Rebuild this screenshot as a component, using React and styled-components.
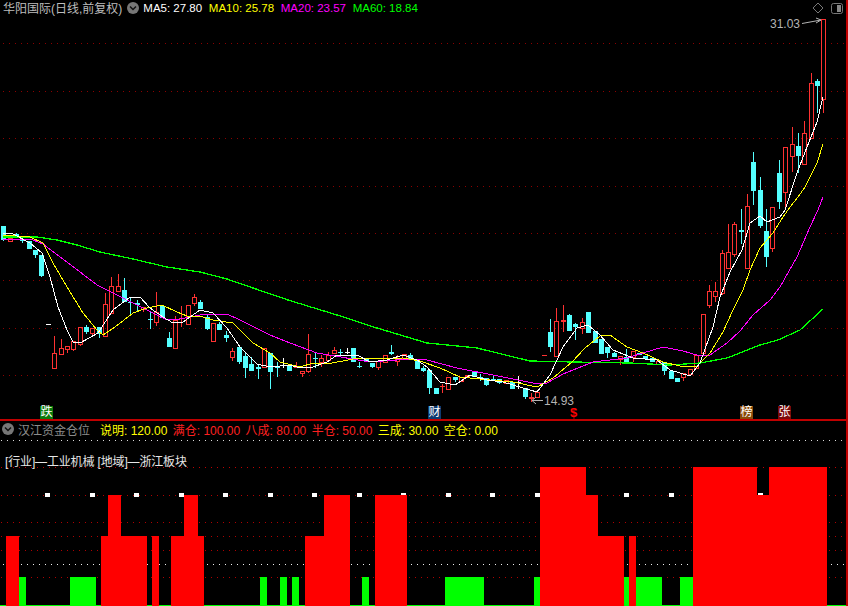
import styled, { createGlobalStyle } from "styled-components";

const GlobalStyle = createGlobalStyle`
  html, body {
    margin: 0;
    padding: 0;
    background: #000;
  }
`;

const FONT = `"Liberation Sans", "Noto Sans CJK SC", sans-serif`;

const Terminal = styled.div`
  display: flex;
  flex-direction: column;
  width: 848px;
  height: 606px;
  overflow: hidden;
  background: #000;
  font-family: ${FONT};
  font-size: 12px;
`;

const PricePanel = styled.section`
  position: relative;
  flex: 0 0 419px;
  border-bottom: 2px solid #c00000;
`;

const IndicatorPanel = styled.section`
  position: relative;
  flex: 1;
`;

const ChartCanvas = styled.svg`
  position: absolute;
  top: 0;
  left: 0;
  display: block;
`;

const PriceHeader = styled.header`
  position: relative;
  display: flex;
  align-items: center;
  height: 15px;
  padding-left: 3px;
`;

const StockName = styled.span`
  color: #bdbdbd;
  font-size: 12px;
  white-space: nowrap;
`;

const RoundToggle = styled.span`
  display: flex;
  align-items: center;
  justify-content: center;
  flex: none;
  width: 12px;
  height: 12px;
  margin: ${(p) => p.$margin};
  border-radius: 50%;
  background: #777;
`;

const MaLabel = styled.span`
  margin-right: 6.7px;
  color: ${(p) => p.$color};
  font-size: 11.5px;
  white-space: nowrap;
`;

const CornerTools = styled.div`
  position: absolute;
  top: 2px;
  right: 5px;
  display: flex;
  align-items: center;
  gap: 7px;
`;

const IndicatorHeader = styled.header`
  position: relative;
  display: flex;
  align-items: center;
  height: 16px;
  padding-left: 2px;
`;

const IndicatorName = styled.span`
  margin-right: 10px;
  color: #8c8c8c;
  font-size: 12px;
  white-space: nowrap;
`;

const LevelLabel = styled.span`
  margin-right: 5.4px;
  color: ${(p) => p.$color};
  white-space: nowrap;
`;

const SectorLine = styled.div`
  position: relative;
  margin: 18px 0 0 5px;
  color: #e6e6e6;
  font-size: 12px;
  line-height: 15px;
  letter-spacing: -0.15px;
`;

const SignalMark = styled.span`
  position: absolute;
  top: 406px;
  left: ${(p) => p.$left}px;
  width: 13px;
  height: 13px;
  color: #fff;
  background: ${(p) => p.$bg};
  font-size: 12px;
  line-height: 13px;
  text-align: center;
`;

const DollarMark = styled.span`
  position: absolute;
  top: 407px;
  left: 570px;
  color: #ff0000;
  font-size: 13px;
  font-weight: bold;
  line-height: 12px;
`;

const PriceNote = styled.span`
  position: absolute;
  top: ${(p) => p.$top}px;
  left: ${(p) => p.$left}px;
  color: #b4b4b4;
  font-size: 12px;
  line-height: 12px;
`;

// kind, body top, body bottom, high, low (pixels on the chart)
const candles = [
  ["c", 226, 240, 226, 241], ["r", 238, 241, 238, 241], ["c", 234, 236, 233, 237], ["c", 240, 241, 238, 243],
  ["c", 241, 249, 241, 249], ["c", 250, 255, 250, 258], ["c", 255, 276, 255, 277], ["d", 324, 325, 324, 325],
  ["r", 353, 368, 336, 368], ["r", 348, 354, 339, 354], ["r", 346, 349, 346, 353], ["r", 341, 349, 341, 351],
  ["r", 327, 344, 327, 346], ["c", 327, 332, 325, 334], ["r", 328, 333, 328, 336], ["c", 327, 334, 327, 338],
  ["r", 304, 336, 293, 337], ["r", 286, 313, 277, 313], ["r", 286, 291, 274, 292], ["c", 290, 302, 278, 302],
  ["c", 302, 303, 298, 315], ["c", 303, 305, 300, 312], ["r", 307, 309, 307, 312], ["c", 319, 320, 312, 329],
  ["r", 312, 322, 292, 326], ["c", 306, 318, 306, 318], ["c", 338, 347, 332, 347], ["r", 320, 348, 316, 348],
  ["f", 318, 319, 306, 327], ["r", 305, 324, 305, 324], ["r", 297, 303, 294, 306], ["c", 302, 309, 300, 309],
  ["c", 317, 329, 314, 330], ["r", 323, 341, 323, 341], ["c", 324, 330, 322, 330], ["c", 335, 338, 331, 342],
  ["r", 351, 357, 348, 361], ["c", 347, 362, 345, 364], ["c", 356, 368, 353, 378], ["c", 364, 371, 357, 371],
  ["c", 367, 369, 364, 379], ["r", 348, 367, 348, 367], ["c", 353, 372, 353, 389], ["c", 367, 368, 362, 377],
  ["w", 365, 366, 358, 368], ["c", 366, 371, 366, 371], ["r", 366, 367, 362, 368], ["r", 371, 373, 371, 377],
  ["r", 354, 371, 334, 373], ["c", 358, 359, 353, 368], ["r", 358, 362, 355, 367], ["r", 355, 360, 352, 360],
  ["r", 350, 353, 347, 353], ["c", 352, 353, 349, 355], ["w", 352, 353, 348, 354], ["c", 348, 362, 348, 362],
  ["c", 366, 367, 362, 368], ["c", 358, 361, 358, 361], ["c", 363, 367, 363, 368], ["r", 361, 367, 360, 370],
  ["r", 355, 362, 355, 362], ["c", 352, 354, 345, 355], ["r", 359, 361, 355, 366], ["r", 354, 358, 354, 358],
  ["c", 355, 359, 353, 359], ["c", 360, 369, 360, 369], ["c", 368, 371, 366, 372], ["c", 370, 388, 370, 394],
  ["c", 388, 394, 388, 394], ["f", 386, 387, 384, 393], ["r", 377, 389, 377, 389], ["c", 377, 380, 377, 382],
  ["r", 377, 381, 377, 381], ["f", 375, 377, 375, 377], ["c", 371, 377, 371, 377], ["c", 377, 378, 374, 381],
  ["c", 378, 385, 378, 386], ["c", 379, 381, 376, 381], ["c", 379, 383, 379, 384], ["r", 380, 383, 380, 383],
  ["c", 382, 389, 382, 389], ["w", 382, 383, 376, 389], ["c", 388, 397, 388, 399], ["f", 397, 399, 393, 402],
  ["r", 392, 397, 392, 397], ["f", 355, 356, 355, 356], ["c", 332, 347, 319, 352], ["r", 321, 356, 308, 356],
  ["f", 320, 322, 305, 332], ["c", 315, 331, 314, 331], ["c", 324, 327, 323, 340], ["r", 322, 328, 318, 334],
  ["c", 312, 333, 312, 333], ["c", 331, 343, 331, 343], ["c", 339, 354, 339, 354], ["c", 347, 353, 347, 358],
  ["c", 353, 357, 352, 357], ["r", 356, 359, 356, 365], ["c", 357, 362, 349, 362], ["r", 351, 357, 351, 362],
  ["c", 353, 355, 353, 355], ["c", 356, 359, 356, 359], ["c", 358, 362, 358, 362], ["r", 361, 364, 361, 364],
  ["c", 362, 371, 362, 375], ["c", 371, 379, 371, 379], ["c", 378, 382, 378, 382], ["r", 373, 377, 373, 381],
  ["r", 369, 374, 369, 374], ["r", 355, 368, 355, 368], ["r", 314, 353, 314, 353], ["r", 291, 305, 285, 308],
  ["r", 291, 296, 282, 302], ["r", 253, 293, 250, 295], ["r", 252, 268, 224, 268], ["r", 224, 254, 222, 257],
  ["c", 230, 232, 209, 244], ["r", 206, 268, 194, 268], ["c", 162, 191, 152, 205], ["c", 190, 226, 177, 228],
  ["c", 231, 257, 209, 267], ["r", 207, 248, 207, 252], ["c", 173, 202, 160, 209], ["r", 147, 192, 147, 210],
  ["r", 144, 156, 127, 172], ["c", 146, 156, 133, 173], ["r", 133, 164, 121, 165], ["r", 83, 138, 73, 138],
  ["c", 81, 86, 79, 113], ["r", 19, 99, 19, 113],
];

const ma60 = "3,237 37,237 57,240 77,245 100,252 133,259 167,267 200,272 227,279 253,288 288,300 337,315 377,328 427,343 477,348 530,361 573,362 630,363 670,365 700,363 727,358 760,345 778,340 800,330 823,309";
const ma20 = "3,239 33,240 43,244 67,262 97,285 113,293 133,303 147,310 167,320 180,319 200,315 227,314 240,320 270,335 290,343 317,353 370,362 410,359 427,360 457,368 503,377 533,383 547,383 563,374 593,362 627,358 643,353 663,347 683,351 700,356 710,355 727,343 740,331 753,315 770,300 780,287 797,257 810,227 818,210 823,197";
const ma10 = "3,235 30,237 43,243 53,263 67,287 83,313 97,330 103,335 115,327 133,313 147,308 162,305 177,312 187,316 203,317 213,320 233,323 253,343 270,353 280,362 300,367 313,363 327,364 353,359 403,358 420,361 440,368 460,377 490,380 513,382 537,387 553,378 572,362 585,348 600,336 610,335 627,347 643,353 663,362 680,366 697,366 710,353 723,332 733,310 743,290 750,270 760,248 773,233 783,217 790,207 798,197 805,187 817,163 823,144";
const ma5 = "3,233 13,234 30,243 42,253 50,277 58,307 67,330 73,342 80,343 98,333 113,310 130,297 140,297 150,308 163,317 173,323 183,322 200,310 213,313 227,328 240,347 257,364 270,367 290,365 300,368 313,367 327,362 337,355 357,355 370,362 387,360 403,355 417,360 427,367 440,382 455,385 470,375 487,380 503,382 523,388 537,392 550,375 563,347 577,328 588,325 600,335 613,350 633,358 657,360 670,370 690,376 700,363 713,327 720,297 730,272 742,250 750,223 760,216 767,222 780,217 785,210 797,173 807,147 817,122 823,97";

const maLines = [
  { points: ma60, color: "#00ff00", width: 1.3 },
  { points: ma20, color: "#ff00ff", width: 1 },
  { points: ma10, color: "#ffff00", width: 1 },
  { points: ma5, color: "#ffffff", width: 1 },
];

const priceGrid = [43, 91, 138, 186, 233, 280, 328, 375];

// left, right, top in the page
const redBars = [
  [6, 19, 536], [101, 147, 536], [108, 121, 495], [152, 159, 536], [171, 204, 536], [184, 198, 495],
  [305, 350, 536], [324, 350, 495], [375, 407, 495], [540, 586, 467], [586, 598, 495], [598, 624, 536],
  [629, 636, 536], [693, 757, 467], [757, 769, 495], [769, 827, 467],
];
const greenBars = [
  [19, 26], [70, 96], [260, 267], [280, 287], [292, 299], [362, 369], [445, 484], [534, 540], [623, 629], [636, 662], [680, 693],
];
const whiteTicks = [47, 92, 136, 181, 225, 270, 314, 359, 403, 448, 492, 537, 626, 671, 760];

const marks = [
  { left: 40, bg: "#0b7a0b", text: "跌" },
  { left: 428, bg: "#0c3a70", text: "财" },
  { left: 740, bg: "#8a4a08", text: "榜" },
  { left: 778, bg: "#7a0a0a", text: "张" },
];

const ChevronDown = () => (
  <svg width="8" height="6" viewBox="0 0 8 6">
    <path d="M1 1.5 L4 4.5 L7 1.5" fill="none" stroke="#111" strokeWidth="1.5" />
  </svg>
);

const PriceChart = () => (
  <ChartCanvas width="848" height="419" viewBox="0 0 848 419">
    {priceGrid.map((y) => (
      <line key={y} x1="3" x2="845" y1={y + 0.5} y2={y + 0.5} stroke="#8c0000" strokeDasharray="1 5" />
    ))}
    <line x1="847" x2="847" y1="0" y2="419" stroke="#c00000" strokeWidth="2" />
    {candles.map(([kind, top, bottom, high, low], i) => {
      const x = Math.round(3.3 + i * 6.357);
      const color = kind === "c" ? "#54ffff" : kind === "w" || kind === "d" ? "#fff" : "#ff3232";
      if (kind === "r") {
        return (
          <g key={i} stroke={color} fill="none" shapeRendering="crispEdges">
            <line x1={x + 0.5} x2={x + 0.5} y1={high} y2={top} />
            <line x1={x + 0.5} x2={x + 0.5} y1={bottom} y2={low} />
            <rect x={x - 2 + 0.5} y={top + 0.5} width="4" height={bottom - top} />
          </g>
        );
      }
      return (
        <g key={i} fill={color} shapeRendering="crispEdges">
          <rect x={x} y={high} width="1" height={low - high} />
          <rect x={x - 2} y={top} width="5" height={bottom - top} />
        </g>
      );
    })}
    {maLines.map((line) => (
      <polyline key={line.color} points={line.points} fill="none" stroke={line.color} strokeWidth={line.width} shapeRendering="crispEdges" />
    ))}
    <path d="M802 23.5 L821 20 M816 18 L821 20 L816 23" fill="none" stroke="#b4b4b4" />
    <path d="M532 400.5 H543 M536 397 L532 400.5 L536 404" fill="none" stroke="#b4b4b4" />
  </ChartCanvas>
);

const IndicatorChart = () => (
  <ChartCanvas width="848" height="185" viewBox="0 421 848 185">
    <line x1="1" x2="846" y1="440.5" y2="440.5" stroke="#dcdcdc" strokeDasharray="1 5" />
    <line x1="1" x2="846" y1="467.5" y2="467.5" stroke="#c00000" strokeDasharray="1 5" />
    {[495, 522, 536, 550, 577].map((y) => (
      <line key={y} x1="1" x2="846" y1={y + 0.5} y2={y + 0.5} stroke="#b00000" strokeDasharray="1 5" />
    ))}
    <line x1="3" x2="846" y1="564.5" y2="564.5" stroke="#f0f0f0" strokeDasharray="1 5" />
    <rect x="0" y="605" width="848" height="1" fill="#00ff00" />
    <rect x="846" y="421" width="2" height="185" fill="#c00000" />
    {whiteTicks.map((x) => (
      <rect key={x} x={x - 2} y="493" width="5" height="4" fill="#fff" />
    ))}
    {greenBars.map(([left, right]) => (
      <rect key={left} x={left} y="577" width={right - left} height="29" fill="#00ff00" />
    ))}
    {redBars.map(([left, right, top]) => (
      <rect key={left + "-" + top} x={left} y={top} width={right - left} height={606 - top} fill="#ff0000" />
    ))}
  </ChartCanvas>
);

const CornerIcons = () => (
  <CornerTools>
    <svg width="12" height="12" viewBox="0 0 12 12">
      <path d="M6 1 L11 6 L6 11 L1 6 Z" fill="none" stroke="#777" />
    </svg>
    <svg width="12" height="11" viewBox="0 0 12 11">
      <rect x="0.5" y="0.5" width="11" height="10" rx="2" fill="none" stroke="#777" />
      <rect x="6" y="2" width="4" height="7" fill="#888" />
    </svg>
  </CornerTools>
);

export default function App() {
  return (
    <Terminal>
      <GlobalStyle />
      <PricePanel>
        <PriceChart />
        <PriceHeader>
          <StockName>华阳国际(日线,前复权)</StockName>
          <RoundToggle $margin="0 4px 0 5px">
            <ChevronDown />
          </RoundToggle>
          <MaLabel $color="#ffffff">MA5: 27.80</MaLabel>
          <MaLabel $color="#ffff00">MA10: 25.78</MaLabel>
          <MaLabel $color="#ff00ff">MA20: 23.57</MaLabel>
          <MaLabel $color="#00ff00">MA60: 18.84</MaLabel>
          <CornerIcons />
        </PriceHeader>
        {marks.map((m) => (
          <SignalMark key={m.text} $left={m.left} $bg={m.bg}>
            {m.text}
          </SignalMark>
        ))}
        <DollarMark>$</DollarMark>
        <PriceNote $top={18} $left={770}>31.03</PriceNote>
        <PriceNote $top={395} $left={544}>14.93</PriceNote>
      </PricePanel>
      <IndicatorPanel>
        <IndicatorChart />
        <IndicatorHeader>
          <RoundToggle $margin="0 4px 0 0">
            <ChevronDown />
          </RoundToggle>
          <IndicatorName>汉江资金仓位</IndicatorName>
          <LevelLabel $color="#ffff00">说明: 120.00</LevelLabel>
          <LevelLabel $color="#ff2020">满仓: 100.00</LevelLabel>
          <LevelLabel $color="#ff2020">八成: 80.00</LevelLabel>
          <LevelLabel $color="#ff2020">半仓: 50.00</LevelLabel>
          <LevelLabel $color="#ffff00">三成: 30.00</LevelLabel>
          <LevelLabel $color="#ffff00">空仓: 0.00</LevelLabel>
        </IndicatorHeader>
        <SectorLine>[行业]—工业机械 [地域]—浙江板块</SectorLine>
      </IndicatorPanel>
    </Terminal>
  );
}
